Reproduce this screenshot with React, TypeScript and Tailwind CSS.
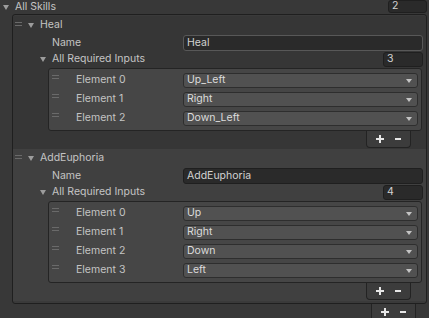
import React from 'react';

const Tri = ({ className = '' }: { className?: string }) => (
  <svg width="6" height="5" viewBox="0 0 6 5" className={className}>
    <path d="M0 0h6L3 5z" fill="#9c9c9c" />
  </svg>
);

const Handle = ({ className = '' }: { className?: string }) => (
  <svg width="7" height="4" viewBox="0 0 7 4" className={className}>
    <rect x="0" y="0" width="7" height="1" fill="#6a6a6a" />
    <rect x="0" y="3" width="7" height="1" fill="#6a6a6a" />
  </svg>
);

const Arrow = () => (
  <svg width="6" height="4" viewBox="0 0 6 4" className="ml-auto mr-[5px]">
    <path d="M0 0h6L3 4z" fill="#c4c4c4" />
  </svg>
);

const PlusMinus = () => (
  <div className="flex items-center justify-center gap-[11px] h-full">
    <svg width="8" height="8" viewBox="0 0 8 8">
      <path d="M3 0h2v3h3v2H5v3H3V5H0V3h3z" fill="#e6e6e6" />
    </svg>
    <svg width="6" height="2" viewBox="0 0 6 2">
      <rect width="6" height="2" fill="#e6e6e6" />
    </svg>
  </div>
);

const Footer = ({ className = '' }: { className?: string }) => (
  <div className={`w-[45px] h-[17px] bg-[#3c3c3c] border-x border-b border-[#232323] rounded-b-[4px] ${className}`}>
    <PlusMinus />
  </div>
);

const TextField = ({ value, className = '' }: { value: string; className?: string }) => (
  <div className={`flex items-center bg-[#2a2a2a] border rounded-[3px] pl-[3px] text-[#d2d2d2] ${className}`}>
    {value}
  </div>
);

const SKILLS = [
  { name: 'Heal', inputs: ['Up_Left', 'Right', 'Down_Left'], bg: 'bg-[#363636]', nameBorder: 'border-[#585858]' },
  { name: 'AddEuphoria', inputs: ['Up', 'Right', 'Down', 'Left'], bg: 'bg-[#404040]', nameBorder: 'border-[#1f1f1f]' },
];

function SkillElement({ name, inputs, bg, nameBorder }: { name: string; inputs: string[]; bg: string; nameBorder: string }) {
  return (
    <div className={`pb-[1px] ${bg}`}>
      <div className="flex h-[18px] items-center pl-[2px]">
        <Handle className="-mt-[2px]" />
        <Tri className="ml-[6px]" />
        <span className="ml-[6px]">{name}</span>
      </div>
      <div className="flex h-[16px] mt-[1px] items-center">
        <div className="w-[170px] pl-[39px]">Name</div>
        <TextField value={name} className={`flex-1 h-full mr-[3px] ${nameBorder}`} />
      </div>
      <div className="flex h-[15px] mt-[1px] items-center pl-[27px]">
        <Tri />
        <span className="ml-[6px]">All Required Inputs</span>
        <TextField value={String(inputs.length)} className="ml-auto w-[40px] h-full mr-[3px] border-[#1f1f1f]" />
      </div>
      <div className="flex flex-col items-end mt-[1px] ml-[35px] mr-[4px]">
        <div className="self-stretch bg-[#464646] border border-[#242424] rounded-[3px] py-[4px] flex flex-col gap-[4px]">
          {inputs.map((dir, i) => (
            <div key={i} className="flex h-[15px] items-center">
              <div className="w-[134px] flex items-center pl-[3px] self-stretch">
                <Handle className="self-start mt-[2px]" />
                <span className="ml-[17px]">Element {i}</span>
              </div>
              <div className="flex-1 h-full mr-[3px] flex items-center bg-[#515151] border border-[#2e2e2e] rounded-[3px] pl-[3px] text-[#dcdcdc]">
                {dir}
                <Arrow />
              </div>
            </div>
          ))}
        </div>
        <Footer className="mr-[11px]" />
      </div>
    </div>
  );
}

export default function App() {
  return (
    <div className="w-[429px] h-[318px] overflow-hidden bg-[#383838] text-[#c4c4c4] text-[10.5px] leading-none font-['Inter',sans-serif]">
      <div className="flex h-[14px] items-center">
        <Tri className="ml-[3px]" />
        <span className="ml-[6px]">All Skills</span>
        <TextField value="2" className="ml-auto w-[39px] h-[13px] mr-[2px] self-start border-[#1f1f1f]" />
      </div>
      <div className="ml-[12px] mr-[2px] border border-[#1f1f1f] rounded-[3px] pt-[1px] pb-[2px] bg-[#3a3a3a]">
        {SKILLS.map(s => (
          <SkillElement key={s.name} {...s} />
        ))}
      </div>
      <div className="flex justify-end">
        <Footer className="mr-[13px] bg-[#3a3a3a]" />
      </div>
    </div>
  );
}
